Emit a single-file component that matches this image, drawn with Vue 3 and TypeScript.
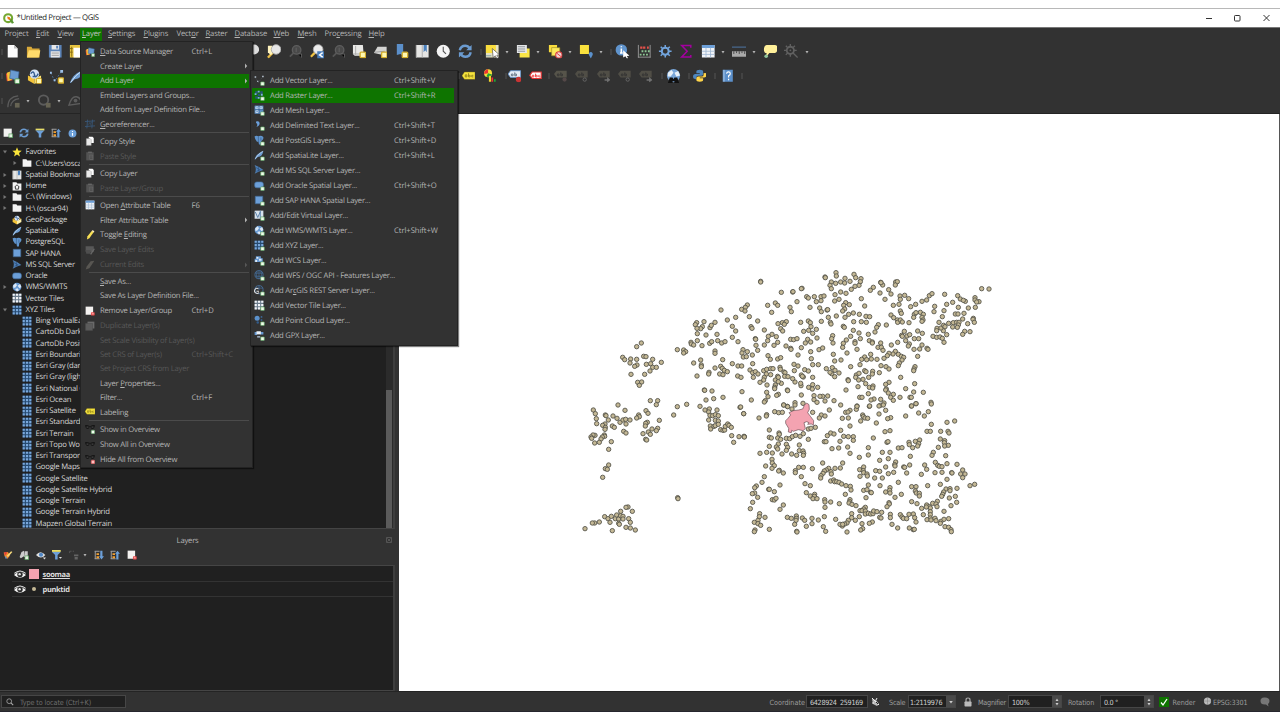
<script setup lang="ts">
interface Tool { x: number; i: string; s?: number }
interface Item { t?: string; i?: string; k?: string; sub?: boolean; off?: boolean; on?: boolean; sep?: boolean }
interface Node { t: string; i: string; d?: number; a?: string }

// Turns centre positions into cells that follow each other in a row
function flow(items: Tool[], size: number) {
  let end = 0
  return items.map((it) => {
    const w = it.i === 'sep' || it.i === 'dot' ? 4 : it.s ?? size
    const gap = it.x - w / 2 - end
    end = it.x + w / 2
    return { i: it.i, style: { width: w + 'px', height: w === 4 ? '10px' : w + 'px', marginLeft: gap + 'px' } }
  })
}
function parse(s: string): Tool[] {
  return s.split(' ').map((p) => {
    const [i, x, z] = p.split(':')
    return { i, x: Number(x), s: z ? Number(z) : undefined }
  })
}
// "&" marks the mnemonic letter
function split(s: string): string[] {
  const n = s.indexOf('&')
  return n < 0 ? [s, '', ''] : [s.slice(0, n), s[n + 1], s.slice(n + 2)]
}

const row1 = flow(parse('sep:1.5 new:12.5 open:33.5 save:55 layout:76 mag:252 magy:274 magd:295 magp:317 magd:338 mapnew:359 map3d:380 bmnew:402 book:422.5 clock:443.5 refresh:465 sep:480.5 select:492 dot:506.5 form:523.5 dot:538 desel:555.5 dot:569.5 selloc:586.5 dot:600.5 sep:611 ident:622.5 abacus:644 gear:665 sigma:686.5 table:708 dot:722.5 ruler:739 dot:754 tip:770 geard:791 dot:806.5'), 14.5)
const row2 = flow(parse('sep:1.5 dsm:12.5 gpkgp:34 vecn:56 feather:76 sep:459 label:468.5:13 diagram:490:13.5 sep:506 labelp:514.5:13.5 labelr:535.5:13 sep:549 labeld:560.5:13.5 labeld2:582:13.5 labeld3:603.5:13.5 labeld2:624.5:13.5 labeld3:646:13.5 sep:661.5 globin:673 sep:688.5 python:699.5:13.5 sep:715 help:727.5:13.5 sep:742'), 15)
const row3 = flow(parse('sep:1.5 curve:13 dot:27.5 circ:44 dot:58.5 shape:75'), 15)
const browserTools = flow(parse('addl:7.5 refresh:23.5 funnel:40 collapse:56 info:72.5:9'), 10)
const layerTools = flow(parse('brush:7.5 grp:24 eyeb:41 funnel2:57 expr:74 dot:85 expand:98.5 collapse:115 remove:131.5'), 10)

const menubar = [
  ['Pro&ject', 0, 31.5], ['&Edit', 0, 21.5], ['&View', 0, 22.5], ['&Layer', 1, 28], ['&Settings', 0, 35.5],
  ['&Plugins', 0, 33], ['Vect&or', 0, 29], ['&Raster', 0, 29], ['&Database', 0, 39], ['&Web', 0, 24], ['&Mesh', 0, 27],
  ['Pro&cessing', 0, 44], ['&Help', 0, 24],
].map((m) => ({ p: split(m[0] as string), on: !!m[1], style: { width: m[2] + 'px' } }))

const menu: Item[] = [
  { t: '&Data Source Manager', i: 'dsm', k: 'Ctrl+L' },
  { t: 'Create Layer', sub: true },
  { t: 'Add Layer', sub: true, on: true },
  { t: 'Embed Layers and Groups...' },
  { t: 'Add from Layer Definition File...' },
  { t: '&Georeferencer...', i: 'georef' },
  { sep: true },
  { t: 'Copy Style', i: 'copy' },
  { t: 'Paste Style', i: 'paste', off: true },
  { sep: true },
  { t: 'Copy Layer', i: 'copy' },
  { t: 'Paste Layer/Group', i: 'paste', off: true },
  { sep: true },
  { t: 'Open &Attribute Table', i: 'table', k: 'F6' },
  { t: 'Filter Attribute Table', sub: true },
  { t: 'Toggle &Editing', i: 'pencil' },
  { t: 'Save Layer Edits', i: 'saved', off: true },
  { t: 'Current Edits', i: 'pencild', off: true, sub: true },
  { sep: true },
  { t: '&Save As...' },
  { t: 'Save As Layer Definition File...' },
  { t: 'Remove Layer/Group', i: 'remove', k: 'Ctrl+D' },
  { t: 'Duplicate Layer(s)', i: 'dup', off: true },
  { t: 'Set Scale Visibility of Layer(s)', off: true },
  { t: 'Set CRS of Layer(s)', k: 'Ctrl+Shift+C', off: true },
  { t: 'Set Project CRS from Layer', off: true },
  { t: 'Layer &Properties...' },
  { t: 'Filter...', k: 'Ctrl+F' },
  { t: 'Labeling', i: 'label' },
  { sep: true },
  { t: 'Show in Overview', i: 'glassp' },
  { t: 'Show All in Overview', i: 'glass' },
  { t: 'Hide All from Overview', i: 'glassx' },
]
const submenu: Item[] = [
  { t: 'Add Vector Layer...', i: 'vec', k: 'Ctrl+Shift+V' },
  { t: 'Add Raster Layer...', i: 'raster', k: 'Ctrl+Shift+R', on: true },
  { t: 'Add Mesh Layer...', i: 'mesh' },
  { t: 'Add Delimited Text Layer...', i: 'comma', k: 'Ctrl+Shift+T' },
  { t: 'Add PostGIS Layers...', i: 'elephant', k: 'Ctrl+Shift+D' },
  { t: 'Add SpatiaLite Layer...', i: 'feather', k: 'Ctrl+Shift+L' },
  { t: 'Add MS SQL Server Layer...', i: 'mssql' },
  { t: 'Add Oracle Spatial Layer...', i: 'oracle', k: 'Ctrl+Shift+O' },
  { t: 'Add SAP HANA Spatial Layer...', i: 'sap' },
  { t: 'Add/Edit Virtual Layer...', i: 'virt' },
  { t: 'Add WMS/WMTS Layer...', i: 'globe', k: 'Ctrl+Shift+W' },
  { t: 'Add XYZ Layer...', i: 'grid' },
  { t: 'Add WCS Layer...', i: 'wcs' },
  { t: 'Add WFS / OGC API - Features Layer...', i: 'wfs' },
  { t: 'Add Ar&cGIS REST Server Layer...', i: 'arc' },
  { t: 'Add Vector Tile Layer...', i: 'gridw' },
  { t: 'Add Point Cloud Layer...', i: 'cloud' },
  { t: 'Add GPX Layer...', i: 'gpx' },
]
const tiles = ['Bing VirtualEarth', 'CartoDb Dark Matter', 'CartoDb Positron', 'Esri Boundaries', 'Esri Gray (dark)', 'Esri Gray (light)', 'Esri National Geo', 'Esri Ocean', 'Esri Satellite', 'Esri Standard', 'Esri Terrain', 'Esri Topo World', 'Esri Transportation', 'Google Maps', 'Google Satellite', 'Google Satellite Hybrid', 'Google Terrain', 'Google Terrain Hybrid', 'Mapzen Global Terrain']
const tree: Node[] = [
  { t: 'Favorites', i: 'star', a: 'v' },
  { t: 'C:\\Users\\oscar94', i: 'folder', d: 1, a: 'r' },
  { t: 'Spatial Bookmarks', i: 'book', a: 'r' },
  { t: 'Home', i: 'home', a: 'r' },
  { t: 'C:\\ (Windows)', i: 'folder', a: 'r' },
  { t: 'H:\\ (oscar94)', i: 'folder', a: 'r' },
  { t: 'GeoPackage', i: 'gpkg' },
  { t: 'SpatiaLite', i: 'feather' },
  { t: 'PostgreSQL', i: 'elephant' },
  { t: 'SAP HANA', i: 'sap' },
  { t: 'MS SQL Server', i: 'mssql' },
  { t: 'Oracle', i: 'oracle' },
  { t: 'WMS/WMTS', i: 'globe', a: 'r' },
  { t: 'Vector Tiles', i: 'gridw' },
  { t: 'XYZ Tiles', i: 'grid', a: 'v' },
  ...tiles.map((t) => ({ t, i: 'grid', d: 1 })),
]

// Point features of the "punktid" layer, in thirds of a pixel per map section
const west = '453,150 472,180 497,172 487,199 497,213 487,232 504,245 380,188 376,194 402,185 397,200 392,206 381,205 420,203 424,196 435,187 382,221 408,225 441,223 363,247 364,252 371,255 382,242 396,257 419,250 425,245 443,242 455,249 465,245 435,273 435,280 322,269 341,270 347,275 341,279 371,309 392,300 394,315 394,320 458,299 435,324 452,319 457,325 463,331 472,335 449,342 459,344 417,337 416,342 381,348 487,311 504,318 503,348 214,249 200,260 158,292 164,299 182,297 200,298 180,309 201,315 194,319 221,289 228,290 248,298 229,313 242,311 274,307 248,322 259,322 240,333 224,343 183,343 203,367 215,366 208,376 144,435 70,450 76,461 79,476 80,491 106,465 108,467 129,468 115,480 141,475 165,451 150,487 159,480 167,478 180,480 168,492 105,492 98,496 106,502 127,498 133,502 105,508 161,514 168,519 103,525 104,529 97,531 93,537 75,526 69,525 63,531 65,535 74,549 88,547 124,545 116,568 116,615 106,626 112,628 98,652 206,465 208,470 200,474 228,452 234,460 232,487 227,490 226,498 268,481 263,505 259,512 246,507 235,516 241,523 219,521 227,538 230,540 241,422 263,422 259,434 311,465 322,440 350,433 390,439 403,390 404,391 426,393 408,420 431,416 459,412 405,450 418,447 416,456 441,450 420,466 428,467 436,464 445,467 416,480 436,481 445,483 421,498 422,507 432,499 436,497 445,493 452,509 459,511 464,510 466,499 473,492 477,496 484,502 485,527 491,547 507,530 323,713 324,716 174,741 168,742 187,754 152,754 104,770 114,776 124,769 120,787 136,776 140,765 146,777 152,767 159,769 159,777 146,790 148,793 176,776 181,787 168,802 181,804 196,810 127,812 88,786 74,789 67,789 45,806 523,530 510,442 521,461'
const north = '62,64 62,66 124,97 158,96 159,95 186,85 184,86 255,51 256,53 288,38 289,48 315,55 342,43 347,53 363,56 361,65 274,66 287,70 302,66 314,69 330,64 270,76 274,86 357,76 345,79 334,88 302,96 318,100 285,104 297,118 284,123 317,128 311,136 328,134 314,147 308,153 364,116 374,138 200,110 205,114 223,110 243,110 252,108 229,125 243,122 210,142 239,144 244,155 261,150 263,149 171,125 150,142 154,155 106,129 113,136 83,136 95,157 22,135 16,142 5,148 15,153 28,170 53,183 127,188 139,185 114,191 133,193 122,206 128,213 182,187 205,183 211,188 213,200 206,211 191,214 218,220 229,208 231,234 33,200 36,205 73,210 96,223 109,230 85,229 83,242 113,247 102,256 73,255 46,236 47,238 48,256 53,271 152,238 161,239 171,236 203,238 212,246 196,249 184,263 138,258 152,265 153,268 212,275 214,296 174,285 237,269 248,264 84,287 91,298 113,297 122,293 37,285 22,275 9,269 6,279 10,291 19,290 38,311 5,318 30,330 38,338 46,335 54,342 40,352 3,352 244,184 265,172 289,168 271,187 273,192 310,199 313,202 326,163 340,159 358,163 315,172 341,185 364,185 379,187 378,169 389,170 340,211 357,219 385,223 361,236 345,245 345,250 351,268 332,229 319,240 310,250 308,262 278,227 275,236 279,249 280,283 321,279 303,300 284,303 392,283 374,291 365,298 380,299 394,297 411,298 415,194 410,202 405,216 439,195 388,242 397,246 397,249 422,67 428,75 423,68 400,82 391,91 420,99 446,89 453,102 435,118 467,66 472,65 466,75 480,108 481,118 494,106 506,116 460,136 477,133 481,153 484,160 453,165 461,173 472,180 473,187 481,180 487,186 507,188 512,140 527,133 546,124 560,120 568,107 576,101 584,139 582,155 614,103 620,133 638,127 653,107 661,117 676,124 670,121 655,142 685,144 705,113 705,120 717,125 710,126 706,142 725,86 747,87 646,162 654,162 672,160 612,152 607,170 668,177 700,175 699,178 703,187 683,191 690,215 674,214 668,223 597,187 541,157 550,163 523,163 528,158 521,172 546,172 549,180 546,184 493,214 485,226 487,229 501,228 509,224 497,242 508,252 505,258 522,268 539,267 546,255 561,265 564,268 533,213 547,220 523,236 536,236 473,247 454,255 533,289 591,205 590,212 610,212 620,224 579,229 590,232 600,231 607,235 612,247 603,204 611,196 615,200 626,190 640,188 650,187 657,187 655,195 652,202 638,201 422,249 414,262 424,262 429,271 466,274 459,282 447,280 442,287 432,295 475,283 484,289 491,292 486,300 478,309 475,317 423,317 438,320 447,327 525,320 522,327 521,332 482,352 418,338 398,334 397,342 374,332 378,335 386,352 369,358 360,314 332,320 349,345 347,352 357,340 356,360 324,359 325,362 354,380 377,371 388,382 399,378 398,384 447,367 437,373 439,387 437,390 524,371 497,386 521,396 550,397 480,412 510,412 514,412 460,403 452,412 445,399 385,401 359,412 366,412 402,417 393,420 422,418 573,427 528,431 514,438 460,421 432,429 421,436 388,439 351,438 302,435 318,390 282,422 263,408 248,409 240,409 222,407 222,419 231,427 255,423 184,405 206,382 218,374 217,387 233,382 183,377 182,370 190,351 184,345 187,349 165,366 163,332 162,313 174,318 194,329 205,333 218,314 235,314 218,352 259,326 277,323 285,331 284,350 275,341 297,339 270,337 71,332 80,328 92,326 99,326 79,342 92,344 120,322 121,328 132,336 135,338 134,349 113,349 106,360 124,370 106,375 104,382 104,386 144,350 158,356 142,390 143,392 115,365 115,352 73,352 71,360 60,367 81,375 80,397 84,410 76,422 73,426 115,403 110,406 131,435 165,428 6,395 34,420 142,439 189,430'
const south = '2,21 11,41 57,54 80,44 79,48 104,35 116,38 127,37 143,20 156,27 165,15 131,15 218,37 226,82 205,87 88,90 268,30 244,45 255,48 238,54 213,85 317,37 330,31 324,36 349,28 351,19 307,55 325,54 330,78 368,45 370,50 375,54 362,63 383,55 302,91 409,69 417,42 437,31 389,18 417,18 430,15 452,53 443,56 435,95 450,92 497,48 515,18 528,11 536,39 553,48 565,35 574,12 574,73 621,67 644,63 561,94 571,94 602,94 624,94 627,99 12,109 13,111 117,99 118,103 88,112 94,114 113,114 122,118 139,115 149,116 157,110 167,106 180,109 190,101 205,118 262,107 272,99 282,102 253,125 258,125 311,109 325,110 340,110 340,121 300,124 323,141 296,144 276,146 330,160 400,114 441,127 444,125 385,143 385,165 358,172 427,157 450,157 475,144 486,143 507,127 508,134 526,124 539,120 536,131 533,138 518,143 511,169 601,117 614,122 613,128 625,136 614,138 595,142 580,157 576,166 617,167 115,132 139,133 178,135 88,139 109,141 113,147 143,142 139,151 178,152 189,153 191,160 190,166 170,166 155,162 126,162 97,159 80,157 60,160 96,178 97,189 77,198 103,197 96,205 118,211 116,213 130,219 73,230 66,247 49,258 44,263 44,279 37,281 53,292 38,307 31,326 120,255 86,268 88,268 103,275 97,299 103,300 108,295 120,328 130,315 176,202 190,202 166,212 166,218 184,230 217,206 195,251 211,257 248,189 308,189 301,204 285,205 266,205 259,210 253,213 249,220 243,227 242,234 273,215 274,222 272,243 281,240 284,245 290,245 297,247 305,252 318,257 331,259 333,270 199,278 211,288 224,283 223,289 219,296 231,296 254,299 255,306 255,322 272,306 298,311 316,283 330,299 329,305 327,309 336,313 348,317 371,201 359,209 370,212 371,218 360,229 381,222 382,228 407,212 419,214 404,234 427,234 419,181 445,176 437,201 467,186 464,194 465,198 461,217 445,221 491,201 494,202 509,195 500,219 475,247 420,257 385,255 371,271 381,269 392,277 394,278 378,293 450,263 449,271 437,276 450,279 484,283 465,292 515,260 528,260 526,273 529,279 538,280 538,288 563,257 554,195 560,208 544,223 586,187 593,196 598,199 606,200 621,191 651,193 585,218 606,217 635,218 636,219 668,210 662,222 675,222 668,233 621,238 704,253 690,257 651,265 601,253 618,267 630,266 630,272 611,276 608,283 605,289 646,289 628,294 650,307 633,317 612,334 592,304 578,310 588,312 591,320 560,315 568,320 571,324 559,321 545,325 531,311 515,305 447,308 448,312 441,320 376,322 371,327 360,332 366,332 376,333 376,342 385,340 392,342 399,341 401,333 411,335 425,337 419,352 423,354 451,343 451,353 335,341 358,350 335,353 346,361 325,361 321,369 314,372 307,378 300,373 308,373 287,358 253,350 235,360 216,355 216,371 187,354 194,361 199,379 169,348 169,355 168,361 164,373 142,352 154,355 250,380 257,394 170,394 171,396 88,388 59,341 75,352 58,350 54,361 43,367 54,371 62,376 45,390 43,395 321,396 397,366 388,370 366,371 368,386 362,390 481,344 486,351 490,355 500,356 507,343 520,342 524,353 528,366 456,373 473,384 508,384 520,389 523,388 550,344 571,335 571,344 571,354 561,359 573,360 585,355 588,362 603,364 601,370 612,358 626,356 615,380 626,382 633,389 634,395'
function pts(s: string, ox: number, oy: number) {
  return s.split(' ').map((p) => {
    const [x, y] = p.split(',').map(Number)
    return { x: +(ox + x / 3).toFixed(2), y: +(oy + y / 3).toFixed(2) }
  })
}
const points = [...pts(west, 171, 146), ...pts(north, 341, 146), ...pts(south, 341, 286)]
</script>

<template>
  <div class="screen">
    <svg class="defs" width="0" height="0">
      <symbol id="new" viewBox="0 0 16 16"><path d="M3 1h7l4 4v10H3z" fill="#fdfdfd" /><path d="M10 1v4h4z" fill="#bbb" /></symbol>
      <symbol id="open" viewBox="0 0 16 16"><path d="M1 3h5l1 2h8v10H1z" fill="#d8a93a" /><path d="M3 7h13l-2 8H1z" fill="#ffdb6b" /></symbol>
      <symbol id="save" viewBox="0 0 16 16"><path d="M1 1h14v14H1z" fill="#5c84b8" /><path d="M4 1h8v5H4zM3 8h10v7H3z" fill="#e8e8e8" /><path d="M4 10h8M4 12.500h8" stroke="#999" /><path d="M9 2h2v3H9z" fill="#5c84b8" /></symbol>
      <symbol id="layout" viewBox="0 0 16 16"><path d="M1 1h14v14H1z" fill="#e8c542" /><path d="M5 4h8v11H5z" fill="#fff" /><path d="M3 3v11M1 5h3M1 9h3" stroke="#866a10" /></symbol>
      <symbol id="dsm" viewBox="0 0 16 16"><path d="M1 5l5-2 2 9-6 1z" fill="#e94b35" /><path d="M2 4l5-2 1 9-5 2z" fill="#f5c339" /><path d="M6 1l9 2-1 9-9-2z" fill="#6a9bd1" stroke="#395f8d" stroke-width=".7" /><rect x="10.500" y="10.500" width="5" height="5" rx="1" fill="#e4f2e0" stroke="#4a9350" /></symbol>
      <symbol id="gpkg" viewBox="0 0 16 16"><path d="M1 6l7 3v6l-7-4z" fill="#f3c43a" /><path d="M15 6l-7 3v6l7-4z" fill="#fff0a8" /><path d="M1 6l7-4 7 4-7 3z" fill="#b58213" /><circle cx="8" cy="5" r="4" fill="#d4e3f5" /><path d="M5 4q3-3 3 1t3 0" stroke="#355d91" stroke-width="1.500" fill="none" /></symbol>
      <symbol id="gpkgp" viewBox="0 0 16 16"><path d="M1 7l7 3v6l-7-4z" fill="#f3c43a" /><path d="M15 7l-7 3v6l7-4z" fill="#ffe678" /><circle cx="8" cy="5.500" r="5" fill="#d4e3f5" /><path d="M4 5q3-4 4 1t4-1M6 8h4" stroke="#355d91" stroke-width="1.500" fill="none" /><rect x="10" y="10" width="5.500" height="5.500" rx="1" fill="#fff8b0" stroke="#c99b17" /></symbol>
      <symbol id="vecn" viewBox="0 0 16 16"><path d="M2 4l4 9 7-10" fill="none" stroke="#4b7096" stroke-dasharray="2 2" /><path d="M1 3h2v2H1zM12 1h3v3h-3zM5 11h2v2H5z" fill="#9cc0e7" /><rect x="10" y="9.500" width="5.500" height="5.500" rx="1" fill="#fff8b0" stroke="#d4ae2c" stroke-width="1.500" /></symbol>
      <symbol id="vec" viewBox="0 0 16 16"><path d="M2 4l5 8 6-8" fill="none" stroke="#5d6870" stroke-width=".8" stroke-dasharray="2 2" /><path d="M1 2h2.500v2.500H1zM13 1h2.500v2.500H13zM5 9h2v2H5z" fill="#b5c1cd" /></symbol>
      <symbol id="feather" viewBox="0 0 16 16"><path d="M1 15Q3 6 15 1q-1 9-9 10L2 15z" fill="#6b9bd0" /><path d="M2 14Q7 6 14 2" stroke="#d8e7f6" fill="none" /></symbol>
      <symbol id="mag" viewBox="0 0 16 16"><circle cx="10" cy="6" r="5.500" fill="#ddd" /></symbol>
      <symbol id="magy" viewBox="0 0 16 16"><path d="M1 15l5-5" stroke="#e9bd45" stroke-width="2.500" /><path d="M1 2h5v9l-2 1-3-3z" fill="#fff3bd" /><circle cx="10" cy="6" r="5.300" fill="#e6e6e6" stroke="#aaa" /></symbol>
      <symbol id="magd" viewBox="0 0 16 16"><path d="M2 14l4-4" stroke="#565656" stroke-width="2" /><circle cx="9.500" cy="6.500" r="4.700" fill="#494949" stroke="#5d5d5d" stroke-width="1.500" /><path d="M9 4v5M11 11h4v4" stroke="#646464" /></symbol>
      <symbol id="magp" viewBox="0 0 16 16"><path d="M1 14l5-5" stroke="#f0c345" stroke-width="2.500" /><circle cx="9" cy="6" r="5.300" fill="#ececec" stroke="#aaa" /><rect x="8" y="8" width="8" height="8" fill="#477cb9" /><path d="M14 9.500L10.500 12l3.500 2.500" stroke="#fff" stroke-width="1.500" fill="none" /></symbol>
      <symbol id="mapnew" viewBox="0 0 16 16"><path d="M1 1h11l1 12H3L1 11z" fill="#e8e8e6" /><path d="M4 2v10M1 11h10" stroke="#aaa" /><rect x="9" y="9" width="6" height="6" rx="1" fill="#fff8b0" stroke="#d4ae2c" stroke-width="1.500" /></symbol>
      <symbol id="map3d" viewBox="0 0 16 16"><path d="M5 3h10v7L11 12 1 10z" fill="#d4d4d2" /><path d="M2 9l11-1" stroke="#999" /><rect x="9.500" y="9" width="6" height="6" rx="1" fill="#fff8b0" stroke="#d4ae2c" stroke-width="1.500" /></symbol>
      <symbol id="bmnew" viewBox="0 0 16 16"><path d="M2 0h7v13l-3-2-4 1z" fill="#5b8fca" /><rect x="8" y="9" width="6" height="6" rx="1" fill="#fff8b0" stroke="#d4ae2c" stroke-width="1.500" /></symbol>
      <symbol id="book" viewBox="0 0 16 16"><path d="M1 1h14v14H1z" fill="#e6e6e4" /><path d="M8 1v14M1.500 1v14" stroke="#aaa" /><path d="M9.500 1h3.500v8l-1.700-2-1.800 2z" fill="#4a80bd" /></symbol>
      <symbol id="clock" viewBox="0 0 16 16"><circle cx="8" cy="8" r="7.200" fill="#f4f4f4" /><path d="M8 3v5l3 3" fill="none" stroke="#555" stroke-width="1.200" /></symbol>
      <symbol id="refresh" viewBox="0 0 16 16"><path d="M2 7Q3 2 8 2q3 0 5 3M14 9q-1 5-6 5-3 0-5-3" fill="none" stroke="#6b9bd0" stroke-width="2.700" /><path d="M15 1v6H9zM1 15V9h6z" fill="#6b9bd0" /></symbol>
      <symbol id="select" viewBox="0 0 16 16"><path d="M1 1h14v14H1z" fill="#e6e2c1" /><path d="M1 1h11v9H1z" fill="#f9dd3d" /><path d="M1 13h6" stroke="#79a" /><path d="M8 5l8 7-3 .3 2 3-2 .7-1.600-3L9 15z" fill="#fff" stroke="#444" stroke-width=".7" /></symbol>
      <symbol id="form" viewBox="0 0 16 16"><path d="M4 5h11v10H4z" fill="#f9e547" /><path d="M1 1h11v9H1z" fill="#e5e7e9" /><path d="M2 3h8M2 5.500h8M2 8h8" stroke="#8a8f94" /></symbol>
      <symbol id="desel" viewBox="0 0 16 16"><path d="M1 1h9v8H1z" fill="#f9dd3d" /><path d="M4 4h9v9H4z" fill="#fce95d" stroke="#9c8a26" stroke-width=".7" /><circle cx="12" cy="12" r="3.500" fill="#f2d4d4" stroke="#d83a3a" stroke-width="1.200" /><path d="M9.500 10l5 4" stroke="#d83a3a" /></symbol>
      <symbol id="selloc" viewBox="0 0 16 16"><path d="M1 1h10v10H1z" fill="#f9e13d" /><path d="M13 16l-2-4a2.200 2.200 0 1 1 4 0z" fill="#5b91cc" /></symbol>
      <symbol id="ident" viewBox="0 0 16 16"><circle cx="7" cy="6.500" r="6.300" fill="#6094cd" /><path d="M7 5v5M5.500 10h3M7 2.500v1.200" stroke="#fff" stroke-width="1.700" /><path d="M9 7l7 6-3 .2 1.500 2.500-1.500.3-1.500-2.500L9 15z" fill="#fff" /></symbol>
      <symbol id="abacus" viewBox="0 0 16 16"><path d="M1.500 1v14M14.500 1v14M1 14.500h14" stroke="#9a9a9a" /><path d="M3.500 4h6M11 4h2" stroke="#e3514b" stroke-width="2.600" stroke-dasharray="2.500 .7" /><path d="M5 8h9M3 11.700h10" stroke="#8ec996" stroke-width="2" stroke-dasharray="2 1.500" /></symbol>
      <symbol id="gear" viewBox="0 0 16 16"><circle cx="8" cy="8" r="3.800" fill="none" stroke="#72a4dc" stroke-width="2.200" /><path d="M8 1v3M8 12v3M1 8h3M12 8h3M3 3l2 2M11 11l2 2M13 3l-2 2M5 11l-2 2" stroke="#72a4dc" stroke-width="1.700" /></symbol>
      <symbol id="geard" viewBox="0 0 16 16"><circle cx="7" cy="7" r="4" fill="none" stroke="#606060" stroke-width="2" /><path d="M7 0v3M7 11v3M0 7h3M11 7h3M2 2l2 2M10 10l5 5M12 2l-2 2M4 10l-2 2" stroke="#606060" stroke-width="1.500" /><circle cx="7" cy="7" r="1" fill="#606060" /></symbol>
      <symbol id="sigma" viewBox="0 0 16 16"><path d="M13 4V1.700H3L9 8l-6 6.300h10V12" fill="none" stroke="#a3009f" stroke-width="1.700" /></symbol>
      <symbol id="table" viewBox="0 0 16 16"><path d="M1 1h14v14H1z" fill="#f1f4f8" /><path d="M1 1h14v3.500H1z" fill="#6c9fd8" /><path d="M1 8h14M1 11.500h14M5.500 4v11M10.500 4v11" stroke="#9fb8d3" stroke-width=".9" /></symbol>
      <symbol id="ruler" viewBox="0 0 16 16"><path d="M0 3.500h16" stroke="#49688e" stroke-width="1.500" /><path d="M0 8h16v6H0z" fill="#aaa" /><path d="M2 8v3M5 8v2M8 8v3M11 8v2M14 8v3" stroke="#444" /></symbol>
      <symbol id="tip" viewBox="0 0 16 16"><path d="M4 1h9q3 0 3 4t-3 5H7l-4 5 1-5Q1 10 1 6t3-5z" fill="#fff09a" /><circle cx="3.500" cy="13.500" r="2" fill="#8fc49a" /></symbol>
      <symbol id="label" viewBox="0 0 16 16"><path d="M3 2.500h13v9H3L0 7z" fill="#f6e33f" stroke="#807414" stroke-width=".5" /><path d="M4 8.500V6h2v2.500H4M8 4v4.500h2V6.500H8M14 6.500h-2v2h2" fill="none" stroke="#8a7d15" /></symbol>
      <symbol id="labelp" viewBox="0 0 16 16"><path d="M3 2h12v8H3L0 6z" fill="#e4ecf6" stroke="#6193cd" /><path d="M4 8V6h2v2H4M8 4v4h2V6H8" fill="none" stroke="#567" /><circle cx="12.500" cy="12.500" r="3.200" fill="#c93434" /></symbol>
      <symbol id="labelr" viewBox="0 0 16 16"><path d="M4 2.500h11v8H4L1 6.500z" fill="#fff" stroke="#ea3434" stroke-width="1.400" /><path d="M4 8.500V6.500h2v2H4M8 4.500v4h2v-2H8M13 6.500h-1v2h2" fill="none" stroke="#e33" /></symbol>
      <symbol id="labeld" viewBox="0 0 16 16"><path d="M3 2h12v8H3L0 6z" fill="#56544a" /><path d="M4 8V6h2v2H4M8 4v4h2V6H8" fill="none" stroke="#333" /><circle cx="12.500" cy="12.500" r="2.500" fill="#544848" /></symbol>
      <symbol id="labeld2" viewBox="0 0 16 16"><path d="M3 2h12v8H3L0 6z" fill="#504e46" /><path d="M4 8V6h2v2H4M8 4v4h2V6H8" fill="none" stroke="#333" /><circle cx="11.500" cy="12.500" r="2" fill="#333" stroke="#6c6c6c" /></symbol>
      <symbol id="labeld3" viewBox="0 0 16 16"><path d="M3 2h12v8H3L0 6z" fill="#504e46" /><path d="M4 8V6h2v2H4M8 4v4h2V6H8" fill="none" stroke="#333" /><path d="M9 12h3v-2.500l4 3.500-4 3v-2H9z" fill="#707070" /></symbol>
      <symbol id="diagram" viewBox="0 0 16 16"><circle cx="6" cy="5" r="4.700" fill="#f5dc3b" /><path d="M6 5V.3A4.700 4.700 0 0 0 1.500 6z" fill="#e33" /><path d="M6 5l4.500 1.500A4.700 4.700 0 0 1 4 9z" fill="#1da535" /><path d="M7 8h2.500v7H7z" fill="#f0d62c" /><path d="M10 10h2v5h-2z" fill="#e33" /><path d="M13 12h2v3h-2z" fill="#1da535" /></symbol>
      <symbol id="globe" viewBox="0 0 16 16"><circle cx="8" cy="8" r="7" fill="#6799d1" /><path d="M2 5l4-3 2 3-3 4H2zM9 6l4-3 2 5-3 2zM5 11l4-1 2 3-3 2z" fill="#dce8f5" /></symbol>
      <symbol id="globin" viewBox="0 0 16 16"><circle cx="8" cy="7" r="7" fill="#79a6d8" /><path d="M2 4l4-3 2 3-3 4H2zM9 4l4-2 2 5-4 1z" fill="#e8f0f8" /><path d="M4 9h3l1 2 1-2h3l2 6h-5v-2H7v2H2z" fill="#111" /></symbol>
      <symbol id="python" viewBox="0 0 16 16"><path d="M8 1q-4 0-4 2v2h4v1H3Q0 6 0 9t3 3h1v-2q0-2 2-2h4q2 0 2-2V3q0-2-4-2z" fill="#4e86bd" /><path d="M8 15q4 0 4-2v-2H8v-1h5q3 0 3-3t-3-2h-.500v2q0 2-2 2H6q-2 0-2 2v2q0 2 4 2z" fill="#ffd54a" /></symbol>
      <symbol id="help" viewBox="0 0 16 16"><path d="M2 1h12v14H2z" fill="#5c90cb" /><path d="M3.500 1v14" stroke="#bcd3ee" /><path d="M6.500 5.500q.5-2 2.500-2t2 2q0 1.500-2 2.500v2M9 11.500v1.700" fill="none" stroke="#fff" stroke-width="1.400" /></symbol>
      <symbol id="curve" viewBox="0 0 16 16"><path d="M2 14Q2 3 13 2M5 13Q6 6 14 5" stroke="#5c5c5c" fill="none" stroke-width="1.300" /><rect x="9.500" y="9.500" width="5" height="5" fill="#666353" /></symbol>
      <symbol id="circ" viewBox="0 0 16 16"><circle cx="7" cy="6.500" r="5" stroke="#5c5c5c" fill="none" stroke-width="2" /><rect x="9.500" y="9.500" width="5" height="5" fill="#666353" /></symbol>
      <symbol id="shape" viewBox="0 0 16 16"><path d="M1 12Q4 2 9 3t5 7z" stroke="#5c5c5c" fill="none" stroke-width="1.500" /><circle cx="8" cy="7" r="2" fill="#5c5c5c" /></symbol>
      <symbol id="addl" viewBox="0 0 16 16"><path d="M1 1h13v13H1z" fill="#f2f2f0" /><rect x="9.500" y="9.500" width="6" height="6" fill="#e4f2e0" stroke="#4a9350" /></symbol>
      <symbol id="funnel" viewBox="0 0 16 16"><path d="M1 1h14v3H1z" fill="#e8df6b" /><path d="M1 4h14l-5 5v6H6V9z" fill="#6c9fd8" /></symbol>
      <symbol id="funnel2" viewBox="0 0 16 16"><path d="M0 0h14v3H0z" fill="#e8df6b" /><path d="M0 3h14L9 8v7H5V8z" fill="#6c9fd8" /><path d="M11 11h5l-2.500 3z" fill="#ddd" /></symbol>
      <symbol id="collapse" viewBox="0 0 16 16"><path d="M1 2h8M1 14h8M2 2v12" stroke="#aaa" stroke-width="1.500" /><path d="M4 5h4v3H4zM4 10h4v3H4z" fill="#f3a02f" /><path d="M10 15V6H8l4-5 4 5h-2.500v9z" fill="#6c9fd8" /></symbol>
      <symbol id="expand" viewBox="0 0 16 16"><path d="M1 2h8M1 14h8M2 2v12" stroke="#aaa" stroke-width="1.500" /><path d="M4 5h4v3H4zM4 10h4v3H4z" fill="#f3a02f" /><path d="M10 1v9H8l4 5 4-5h-2.500V1z" fill="#6c9fd8" /></symbol>
      <symbol id="info" viewBox="0 0 16 16"><circle cx="8" cy="8" r="7" fill="#6c9fd8" /><path d="M8 7v5M8 3.500v2" stroke="#fff" stroke-width="2" /></symbol>
      <symbol id="brush" viewBox="0 0 16 16"><path d="M1 4l7-1 3 6-4 5-4-3z" fill="#ef8c2d" /><path d="M2 3l5 1-4 5z" fill="#e23b3b" /><path d="M6 9l7-7 2 1-7 8z" fill="#f8dc7d" /><path d="M3 9l4 4-3 1z" fill="#5c90cb" /></symbol>
      <symbol id="grp" viewBox="0 0 16 16"><path d="M4 3l4-2v9l-5 3-2-2zM9 2h5v9H8z" fill="#ccc" /><rect x="9.500" y="9.500" width="6" height="6" fill="#e4f2e0" stroke="#4a9350" /></symbol>
      <symbol id="eyeb" viewBox="0 0 16 16"><path d="M0 8q7-9 15 0-7 8-15 0z" fill="#ddd" /><circle cx="8" cy="7.500" r="3.300" fill="#4f86c4" /><path d="M11 12h5l-2.500 3z" fill="#ddd" /></symbol>
      <symbol id="expr" viewBox="0 0 16 16"><path d="M1 2h3M6 2h2M1 2v3" stroke="#555" stroke-width="1.500" /><path d="M8 7h7v3H8zM9 11h5v4H9z" fill="#646464" /></symbol>
      <symbol id="remove" viewBox="0 0 16 16"><path d="M1 1h12v13H1z" fill="#f4f2f0" /><rect x="9.500" y="10" width="6" height="5" rx="1" fill="#ea4e4e" /><path d="M11 12.500h3" stroke="#fff" /></symbol>
      <symbol id="dup" viewBox="0 0 16 16"><path d="M4 1h11v11H4z" fill="#777" /><path d="M1 4h11v11H1z" fill="#666" stroke="#555" /></symbol>
      <symbol id="star" viewBox="0 0 16 16"><path d="M8 .5l2 5.200 5.500.3-4.300 3.500 1.500 5.500L8 12l-4.700 3 1.500-5.500L.5 6 6 5.700z" fill="#fbe53b" /></symbol>
      <symbol id="folder" viewBox="0 0 16 16"><path d="M1 2h6l1.500 2H15v10H1z" fill="#f3f3f3" /></symbol>
      <symbol id="home" viewBox="0 0 16 16"><path d="M1 2h6l1.500 2H15v11H1z" fill="#f3f3f3" /><path d="M4 10l4-4 4 4M5.500 9v4h5V9" stroke="#333" stroke-width="1.400" fill="none" /></symbol>
      <symbol id="elephant" viewBox="0 0 16 16"><path d="M1 2q3-2 6 0 4-2 8 1 1 4-3 7v-3l-1 8H8l-1-5-2 1Q1 7 1 2z" fill="#6094cd" /><path d="M7 2v8M11 4v5" stroke="#2d4c70" stroke-width=".8" /></symbol>
      <symbol id="sap" viewBox="0 0 16 16"><path d="M2 2h12v12H2z" fill="#6c9fd8" stroke="#3e658f" /></symbol>
      <symbol id="mssql" viewBox="0 0 16 16"><path d="M1 0q7 2 14 8-7 2-14 6 4-7 0-14z" fill="#4f80b6" /><path d="M3 4l7 4-6 2M7 3v7" stroke="#294c75" fill="none" /></symbol>
      <symbol id="oracle" viewBox="0 0 16 16"><rect x="1" y="3" width="14" height="9.500" rx="3.500" fill="#6c9fd8" stroke="#416f9f" /></symbol>
      <symbol id="grid" viewBox="0 0 16 16"><path d="M1 1h14v14H1z" fill="#264a70" /><path d="M1 1h3.500v3.500H1zM6.300 1h3.500v3.500H6.300zM11.500 1H15v3.500h-3.500zM1 6.300h3.500v3.500H1zM6.300 6.300h3.500v3.500H6.300zM11.500 6.300H15v3.500h-3.500zM1 11.500h3.500V15H1zM6.300 11.500h3.500V15H6.300zM11.500 11.500H15V15h-3.500z" fill="#79a8dc" /></symbol>
      <symbol id="gridw" viewBox="0 0 16 16"><path d="M1 1h14v14H1z" fill="#6a7b8c" /><path d="M1 1h3.500v3.500H1zM6.300 1h3.500v3.500H6.300zM11.500 1H15v3.500h-3.500zM1 6.300h3.500v3.500H1zM6.300 6.300h3.500v3.500H6.300zM11.500 6.300H15v3.500h-3.500zM1 11.500h3.500V15H1zM6.300 11.500h3.500V15H6.300zM11.500 11.500H15V15h-3.500z" fill="#f3f6fa" /></symbol>
      <symbol id="georef" viewBox="0 0 16 16"><path d="M4 1L3 15M12 1l-1 14M0 4l16-1M0 12l16-1" stroke="#38587a" stroke-width="1.400" /><path d="M7 4l3 7M4 9l8-4" stroke="#35506d" /></symbol>
      <symbol id="copy" viewBox="0 0 16 16"><path d="M6 1h6l2 2v8H6z" fill="#fff" /><path d="M2 4h6l2 2v9H2z" fill="#e9e9e9" stroke="#777" stroke-width=".6" /></symbol>
      <symbol id="paste" viewBox="0 0 16 16"><path d="M2 2h12v13H2z" fill="#5b5b5b" /><path d="M5 1h6v2H5z" fill="#777" /><path d="M7 6h6v8H7z" fill="#737373" /><path d="M8 8h4M8 10h4M8 12h4" stroke="#484848" /></symbol>
      <symbol id="pencil" viewBox="0 0 16 16"><path d="M11 1l3 2-7 10-4 2 1-5z" fill="#f8df54" /><path d="M12 0l3 2-1 2-3-2z" fill="#ffeec0" /></symbol>
      <symbol id="pencild" viewBox="0 0 16 16"><path d="M9 2l6-1-8 12-6 2 2-5z" fill="#625f5a" /></symbol>
      <symbol id="saved" viewBox="0 0 16 16"><path d="M1 2h13v9H1z" fill="#626262" /><path d="M1 8h8v6H2z" fill="#555" /><path d="M15 6l-6 9" stroke="#777" stroke-width="2" /></symbol>
      <symbol id="glass" viewBox="0 0 16 16"><path d="M0 5q4-1 7 1h2q3-2 7-1-1 6-4 6T8.500 7h-1Q7 11 4 11T0 5z" fill="#161616" /><path d="M2.500 7h3v2h-3zM10.500 7h3v2h-3z" fill="#444" /></symbol>
      <symbol id="glassp" viewBox="0 0 16 16"><path d="M0 2q4-1 7 1h2q3-2 7-1-1 6-4 6T8.500 4h-1Q7 8 4 8T0 2z" fill="#161616" /><path d="M2.500 4h3v2h-3zM10.500 4h3v2h-3z" fill="#444" /><rect x="10" y="10" width="5.500" height="5.500" rx="1" fill="#f4fff2" stroke="#5a9d5e" /></symbol>
      <symbol id="glassx" viewBox="0 0 16 16"><path d="M0 2q4-1 7 1h2q3-2 7-1-1 6-4 6T8.500 4h-1Q7 8 4 8T0 2z" fill="#161616" /><path d="M2.500 4h3v2h-3zM10.500 4h3v2h-3z" fill="#444" /><rect x="10" y="10" width="5.500" height="5.500" rx="1" fill="#ffc0c0" stroke="#e34d4d" /></symbol>
      <symbol id="raster" viewBox="0 0 16 16"><path d="M2 2h4v4H2zM10 2h4v4h-4zM6 6h4v4H6zM2 10h4v4H2z" fill="#28527e" /><path d="M6 1h3v3H6zM1 5h3v3H1zM11 6h3v3h-3zM6 11h3v3H6z" fill="#7cabdd" /></symbol>
      <symbol id="mesh" viewBox="0 0 16 16"><path d="M1 1h14v13H1z" fill="#6094cd" /><path d="M3 3h4v3H3zM9 3h4v3H9zM3 9h4v3H3z" fill="none" stroke="#dbe6f2" stroke-width="1.200" /><path d="M1 7.500h14M8 1v13" stroke="#2d5583" /></symbol>
      <symbol id="comma" viewBox="0 0 16 16"><path d="M4 2q5-1 5 3t-5 6q2-3 1-5-3-1-1-4z" fill="#6ca0dc" /></symbol>
      <symbol id="virt" viewBox="0 0 16 16"><path d="M1 1h14v13H1z" fill="#d8e2ec" /><path d="M2 3l4 9 4-9M10 1v13" stroke="#547ca8" stroke-width="1.500" fill="none" /></symbol>
      <symbol id="wcs" viewBox="0 0 16 16"><path d="M3 2h8v3h3v6H1V6h2z" fill="#6799d1" /><path d="M4 3h3v3H4zM8 6h4v3H8zM2 8h3v3H2z" fill="#dce8f5" /></symbol>
      <symbol id="wfs" viewBox="0 0 16 16"><circle cx="8" cy="7.500" r="6.500" fill="none" stroke="#4775a6" stroke-width="1.300" /><path d="M8 1v13M2 5h12M2 10h12M5 2q-2 6 0 11M11 2q2 6 0 11" stroke="#4775a6" fill="none" /></symbol>
      <symbol id="arc" viewBox="0 0 16 16"><circle cx="8" cy="7.500" r="6.500" fill="none" stroke="#4775a6" stroke-width="1.300" /><path d="M8 1v7M2 5h12" stroke="#4775a6" /><path d="M7 6a4 4 0 1 0 1 6M4 10h4" stroke="#ddd" stroke-width="1.700" fill="none" /></symbol>
      <symbol id="cloud" viewBox="0 0 16 16"><circle cx="5" cy="5" r="4" fill="#5b91cc" /><circle cx="12" cy="3" r="1.500" fill="#3c689a" /><circle cx="6" cy="12" r="2" fill="#315b8b" /><circle cx="12" cy="8" r="1.500" fill="#315b8b" /></symbol>
      <symbol id="gpx" viewBox="0 0 16 16"><path d="M1 3h4v5H1zM10 3h5v4h-5z" fill="#6799d1" /><path d="M4 2h7v5H4z" fill="#e9f0f8" /><path d="M5 11h5" stroke="#b6cbe2" stroke-width="2" /></symbol>
      <symbol id="eye" viewBox="0 0 16 12"><path d="M0 6.500Q7-1 16 6.500 8 14 0 6.500z" fill="#f4f4f4" /><circle cx="8" cy="6" r="3.600" fill="#2a2a2a" /><circle cx="7.500" cy="5.500" r="1.600" fill="#e4e4e4" /><path d="M.5 4.500Q8-2 15.500 4.500" fill="none" stroke="#eee" stroke-width="1.400" /></symbol>
      <symbol id="sep" viewBox="0 0 4 10"><path d="M2 2v6" stroke="#555" /></symbol>
      <symbol id="dot" viewBox="0 0 4 10"><path d="M.5 4h3L2 6.500z" fill="#b5b5b5" /></symbol>
    </svg>

    <header class="titlebar">
      <svg class="logo" viewBox="0 0 16 16"><circle cx="7.500" cy="7.500" r="5.800" fill="none" stroke="#75a832" stroke-width="3" /><path d="M8 8h4l4 6-3 1.500z" fill="#589632" /><path d="M6 5l4 1 1 4-4-1z" fill="#ee7913" /></svg>
      <span class="title">*Untitled Project — QGIS</span>
      <svg class="winbtns" width="70" height="10" viewBox="0 0 70 10"><path d="M1 5.500h6" stroke="#333" /><rect x="29.500" y="2.500" width="5.500" height="5.500" rx=".8" fill="none" stroke="#333" /><path d="M58.500 2l6 6M64.500 2l-6 6" stroke="#333" /></svg>
    </header>

    <nav class="menubar">
      <span v-for="(m, n) in menubar" :key="n" class="mb" :style="m.style"><span :class="{ act: m.on }">{{ m.p[0] }}<u>{{ m.p[1] }}</u>{{ m.p[2] }}</span></span>
    </nav>
    <div class="bars">
      <div class="bar b1"><svg v-for="(c, n) in row1" :key="n" :style="c.style"><use :href="'#' + c.i" /></svg></div>
      <div class="bar b2"><svg v-for="(c, n) in row2" :key="n" :style="c.style"><use :href="'#' + c.i" /></svg></div>
      <div class="bar b3"><svg v-for="(c, n) in row3" :key="n" :style="c.style"><use :href="'#' + c.i" /></svg></div>
    </div>

    <main class="body">
      <aside class="dock">
        <div class="bar small btools"><svg v-for="(c, n) in browserTools" :key="n" :style="c.style"><use :href="'#' + c.i" /></svg></div>
        <div class="browser">
          <div class="tree">
            <div v-for="n in tree" :key="n.t" class="node" :class="{ deep: n.d }">
              <svg class="tw" viewBox="0 0 6 6"><path v-if="n.a === 'v'" d="M1 1.500h4L3 4.500z" fill="#777" /><path v-if="n.a === 'r'" d="M1.500 1v4l3-2z" fill="#777" /></svg>
              <svg class="ic"><use :href="'#' + n.i" /></svg>
              <span>{{ n.t }}</span>
            </div>
          </div>
          <div class="scroll"><div class="thumb"></div></div>
        </div>
        <div class="dtitle">
          <span>Layers</span>
          <svg viewBox="0 0 6 6" width="6" height="6"><path d="M.5.5h5v5h-5zM1.500 1.500l3 3M4.500 1.500l-3 3" fill="none" stroke="#5d5d5d" stroke-width=".8" /></svg>
        </div>
        <div class="bar small ltools"><svg v-for="(c, n) in layerTools" :key="n" :style="c.style"><use :href="'#' + c.i" /></svg></div>
        <div class="layers">
          <div class="lrow"><svg class="eye"><use href="#eye" /></svg><i class="poly"></i><b><u>soomaa</u></b></div>
          <div class="lrow"><svg class="eye"><use href="#eye" /></svg><i class="pt"></i><b>punktid</b></div>
        </div>
      </aside>
      <svg class="map" width="880" height="577" viewBox="0 0 880 577">
        <circle v-for="(p, n) in points" :key="n" :cx="p.x" :cy="p.y" r="2.200" />
        <path transform="translate(341 286) scale(.3333)" d="M200 9l7 5 1 14-5 10 9 12 9 12-1 14-6-4-11 1 4-5-7-3-8 3 4 17-6 7-15-3-15 5-5-3-1 7-9-2 1-11-9-15v-8l7-7 8-10-5-7 13-6 16-2 12-3 5-11z" fill="#f4a3b1" stroke="#5a4045" stroke-width="1.800" />
      </svg>
    </main>

    <footer class="status">
      <div class="locator"><svg viewBox="0 0 10 10"><circle cx="4" cy="4" r="3" fill="none" stroke="#aaa" /><path d="M6.200 6.200L9 9" stroke="#aaa" stroke-width="1.300" /></svg><span>Type to locate (Ctrl+K)</span></div>
      <span class="lb c1">Coordinate</span>
      <div class="fd f1"><span>6428924&nbsp; 259169</span></div>
      <svg class="s1" viewBox="0 0 10 10"><path d="M1 2l4 1 3 4-2 2-4-2z" fill="#bbb" /><path d="M1 1l3 3M4 4l4 4M6 1l-1 2M1 6h2" stroke="#eee" /><path d="M5 5l2 2" stroke="#222" /></svg>
      <span class="lb c2">Scale</span>
      <div class="fd f2"><span>1:2119976</span><i class="sp"><svg viewBox="0 0 6 10"><path d="M1.200 4h3.600L3 6.500z" fill="#ccc" /></svg></i></div>
      <svg class="s2" viewBox="0 0 8 10"><path d="M2 5V3q0-2 2-2t2 2v2" fill="none" stroke="#aaa" stroke-width="1.200" /><rect x=".5" y="4.500" width="7" height="5" rx=".7" fill="#bbb" /></svg>
      <span class="lb c3">Magnifier</span>
      <div class="fd f3"><span>100%</span><i class="sp"><svg viewBox="0 0 6 10"><path d="M1.500 4L3 1.500 4.500 4zM1.500 6L3 8.500 4.500 6z" fill="#ccc" /></svg></i></div>
      <span class="lb c4">Rotation</span>
      <div class="fd f4"><span>0.0 °</span><i class="sp"><svg viewBox="0 0 6 10"><path d="M1.500 4L3 1.500 4.500 4zM1.500 6L3 8.500 4.500 6z" fill="#ccc" /></svg></i></div>
      <svg class="chk" viewBox="0 0 10 10"><path d="M0 0h10v10H0z" fill="#0e7400" /><path d="M2 5.500L4 8l4-6" fill="none" stroke="#fff" stroke-width="1.300" /></svg>
      <span class="lb c5">Render</span>
      <svg class="s3" viewBox="0 0 10 10"><circle cx="5" cy="4.500" r="4" fill="#bbb" /><path d="M1 4.500h8M5 .5v8" stroke="#777" stroke-width=".5" /></svg>
      <span class="lb c6">EPSG:3301</span>
      <svg class="s4" viewBox="0 0 10 10"><path d="M5 .5q4.500 0 4.500 3.500 0 2-1.500 3l.5 2.500L6 7.500Q.5 8 .5 4T5 .5z" fill="#777" /></svg>
    </footer>

    <div class="menu main">
      <template v-for="(m, n) in menu" :key="n">
        <div v-if="m.sep" class="msep"></div>
        <div v-else class="mi" :class="{ icon: m.i, off: m.off, on: m.on }">
          <svg class="mic"><use v-if="m.i" :href="'#' + m.i" /></svg>
          <span class="mt">{{ split(m.t!)[0] }}<u>{{ split(m.t!)[1] }}</u>{{ split(m.t!)[2] }}</span>
          <span class="mk">{{ m.k }}</span>
          <svg v-if="m.sub" class="ar" viewBox="0 0 4 6"><path d="M1 .5l2.200 2.500L1 5.500z" fill="currentColor" /></svg>
        </div>
      </template>
    </div>
    <div class="menu child">
      <div v-for="m in submenu" :key="m.t" class="mi icon" :class="{ on: m.on }">
        <svg class="mic" viewBox="0 0 11 11"><use :href="'#' + m.i" width="10" height="10" /><rect x="6.700" y="6.900" width="3.600" height="3.600" rx=".6" fill="#eefbe9" stroke="#5a9d5e" stroke-width=".7" /></svg>
        <span class="mt">{{ split(m.t!)[0] }}<u>{{ split(m.t!)[1] }}</u>{{ split(m.t!)[2] }}</span>
        <span class="mk">{{ m.k }}</span>
      </div>
    </div>
  </div>
</template>

<style>
html, body { margin: 0; background: #fff; overflow: hidden; }
</style>
<style scoped>
* { box-sizing: border-box; }
.screen { position: relative; width: 1280px; height: 720px; padding-top: 8px; display: flex; flex-direction: column; overflow: hidden; background: #fff; color: #b4b4b4; font: 7.700px/10px "Open Sans", "Noto Sans", sans-serif; letter-spacing: -.23px; text-rendering: geometricPrecision; white-space: nowrap; }
.defs { position: absolute; }
svg { flex: none; display: block; }
u { text-underline-offset: 1px; text-decoration-thickness: .6px; }
.titlebar { height: 20px; flex: none; display: flex; align-items: center; border-top: 1px solid #b8b8b8; border-bottom: 1px solid #777; color: #222; background: #fff; }
.logo { width: 11px; height: 11px; margin-left: 3px; }
.title { margin-left: 2.500px; font-size: 7.800px; letter-spacing: -.36px; }
.winbtns { margin-left: auto; margin-right: 5px; }
.menubar { height: 13px; flex: none; background: #323232; display: flex; align-items: stretch; padding-left: 4.500px; letter-spacing: -.16px; }
.mb { flex: none; display: flex; }
.mb > span { display: block; line-height: 13px; }
.mb > span.act { background: #0e7400; width: 21.500px; padding-left: 2px; color: #c4c4c4; }
.bars { height: 73px; flex: none; background: #323232; border-bottom: 1px solid #242424; display: flex; flex-direction: column; }
.bar { display: flex; align-items: center; }
.b1 { height: 21px; }
.b2 { height: 28px; }
.b3 { height: 22px; }
.body { height: 577px; flex: none; display: flex; background: #323232; border-right: 1px solid #555; }
.dock { width: 399px; flex: none; display: flex; flex-direction: column; }
.map { background: #fff; }
.map circle { fill: #c4b895; stroke: #57564c; stroke-width: .9; }
.btools { height: 31px; padding-top: 8px; border-bottom: 1px solid #4a4a4a; flex: none; }
.browser { height: 384px; flex: none; width: 395px; display: flex; background: #202020; border-right: 2px solid #3e3e3e; border-bottom: 1px solid #444; overflow: hidden; }
.tree { flex: 1; padding-top: 1.500px; color: #d4d4d4; }
.node { height: 11.250px; display: flex; align-items: center; padding-left: 2px; }
.node.deep { padding-left: 12px; }
.node span { padding-top: .5px; }
.tw { width: 6px; height: 6px; margin-right: 4px; }
.ic { width: 10px; height: 10px; margin-right: 3.500px; }
.scroll { width: 7px; background: #2b2b2b; display: flex; align-items: flex-end; }
.thumb { width: 6px; height: 138px; background: #5b5b5b; }
.dtitle { height: 22px; flex: none; width: 392px; display: flex; align-items: center; justify-content: flex-end; }
.dtitle span { margin-right: 187.500px; padding-top: 2px; }
.ltools { height: 12px; flex: none; margin-top: -2px; }
.layers { flex: 1; width: 395px; margin-top: 4px; padding-top: 1px; background: #202020; border-top: 1px solid #454545; border-right: 2px solid #3e3e3e; border-bottom: 1px solid #454545; }
.lrow { height: 15px; margin-left: 12px; display: flex; align-items: center; border-bottom: 1px solid #333; color: #ddd; font-size: 7.500px; }
.lrow b { padding-top: 1px; letter-spacing: -.35px; }
.eye { width: 12px; height: 9px; margin-left: 1.500px; }
.lrow i { flex: none; }
.poly { width: 10px; height: 10px; background: #f4a3b1; margin: 0 3.500px; }
.pt { width: 4px; height: 4px; border-radius: 50%; background: #c4b895; margin: 0 6.500px; }
.status { height: 21px; flex: none; background: #323232; border-top: 1px solid #242424; border-bottom: 1px solid #26262e; display: flex; align-items: center; color: #9c9c9c; font: 7.200px/11px "DejaVu Sans Condensed", "DejaVu Sans", sans-serif; letter-spacing: 0; }
.status span { padding-top: 1px; }
.locator { width: 125px; height: 13px; margin-left: 1px; background: #202020; border: 1px solid #464646; display: flex; align-items: center; color: #6e6e6e; letter-spacing: -.1px; }
.locator svg { width: 8px; height: 8px; margin: 0 6px 0 4px; }
.lb { flex: none; }
.fd { flex: none; height: 13px; border: 1px solid #464646; background: #202020; color: #d0d0d0; display: flex; align-items: center; padding-left: 3px; letter-spacing: -.32px; }
.fd i { margin-left: auto; width: 9px; height: 11px; background: #4a4a4a; display: flex; align-items: center; justify-content: center; font-style: normal; }
.fd i svg { width: 6px; height: 10px; }
.c1 { margin-left: 643.500px; width: 36.500px; }
.f1 { width: 62px; }
.s1 { width: 10px; height: 10px; margin: 0 8px 0 3px; }
.c2 { width: 19px; letter-spacing: -.2px; }
.f2 { width: 48px; padding-left: 1px; }
.s2 { width: 8px; height: 10px; margin: 0 6px 0 8px; }
.c3 { width: 30px; letter-spacing: -.25px; }
.f3 { width: 54px; }
.c4 { margin-left: 6px; width: 32px; letter-spacing: -.1px; }
.f4 { width: 54px; }
.chk { width: 10px; height: 10px; margin: 0 3.500px 0 5px; }
.c5 { width: 30.500px; }
.s3 { width: 9px; height: 9px; margin-right: 1px; }
.c6 { width: 47px; letter-spacing: -.15px; }
.s4 { width: 10px; height: 10px; }
.menu { position: absolute; background: #323232; border: 1px solid #232323; box-shadow: 1px 1px 1px rgba(0, 0, 0, .5); display: flex; flex-direction: column; }
.main { left: 80px; top: 41px; width: 173px; height: 427px; padding: 2.200px 3px 0 1px; }
.child { left: 250px; top: 70px; width: 208px; height: 276px; padding: 2px 3px 0 1px; }
.mi { height: 14.370px; flex: none; display: flex; align-items: center; padding-left: 2.500px; }
.mi.icon { height: 15px; }
.mi.on { background: #0e7400; }
.mi.off { color: #585858; }
.mi.off .mic { opacity: .8; }
.mic { width: 10px; height: 10px; margin-right: 5.500px; }
.mt { width: 91.500px; flex: none; padding-top: 1px; }
.mk { flex: 1; padding-top: 1px; letter-spacing: -.08px; }
.ar { width: 4px; height: 6px; margin-right: 1px; }
.child .mi { padding-left: 1.500px; }
.child .mic { width: 11px; height: 11px; }
.child .mt { width: 124px; }
.msep { height: 2.100px; flex: none; margin-left: 7px; border-top: 1px solid #4b4b4b; }
</style>
